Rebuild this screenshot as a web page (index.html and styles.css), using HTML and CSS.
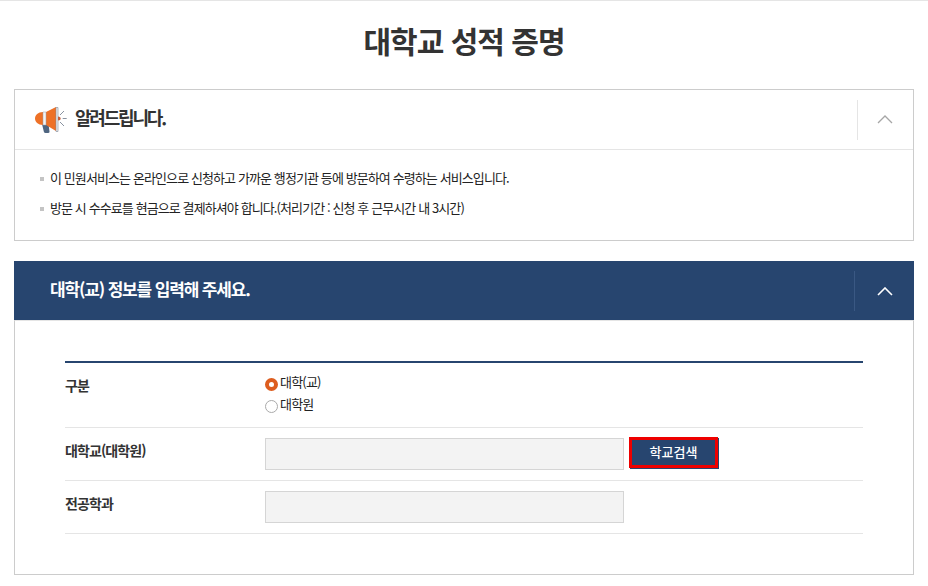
FILE: index.html
```html
<!DOCTYPE html>
<html lang="ko">
<head>
    <meta charset="UTF-8">
    <title>대학교 성적 증명</title>
    <link rel="stylesheet" href="styles.css">
</head>
<body>
    <h1 class="page-title">대학교 성적 증명</h1>

    <div class="notice">
        <div class="notice-head">
            <svg class="notice-icon" viewBox="0 0 32 26" width="32" height="26">
                <path d="M7 17h6.500l1 7.500c.2 1-.6 1.500-2.700 1.500-2 0-2.800-.5-3-1.500z" fill="#4f6580"/>
                <path d="M8 5C3 5 0 8 0 11.500S3 18 8 18z" fill="#ee7127"/>
                <path d="M11 5l10-5v24l-10-6z" fill="#ee7127"/>
                <path d="M8 5h3v13H8z" fill="#f4f4f4" stroke="#9aa2ad" stroke-width=".5"/>
                <path d="M21 .5h2v24h-2z" fill="#eef0f3" stroke="#7d8796" stroke-width=".6"/>
                <path d="M23 9.500c1.800 0 2.700 1 2.700 2s-.9 2-2.700 2z" fill="#c9603a"/>
                <path d="M25 8l4-4M27.700 11.500h4M25 15l4 4" stroke="#8a93a0" stroke-width="1" fill="none"/>
            </svg>
            <strong class="notice-title">알려드립니다.</strong>
            <div class="toggle">
                <svg viewBox="0 0 16 9" width="16" height="9"><path d="M1 8l7-7 7 7" fill="none" stroke="#a6a6a6" stroke-width="1.300"/></svg>
            </div>
        </div>
        <ul class="notice-list">
            <li>이 민원서비스는 온라인으로 신청하고 가까운 행정기관 등에 방문하여 수령하는 서비스입니다.</li>
            <li>방문 시 수수료를 현금으로 결제하셔야 합니다.(처리기간 : 신청 후 근무시간 내 3시간)</li>
        </ul>
    </div>

    <div class="section-bar">
        <strong class="section-title">대학(교) 정보를 입력해 주세요.</strong>
        <div class="toggle toggle-dark">
            <svg class="toggle-arrow" viewBox="0 0 16 9" width="16" height="9"><path d="M1 8l7-7 7 7" fill="none" stroke="#fff" stroke-width="1.600"/></svg>
        </div>
    </div>

    <div class="form-box">
        <div class="form-table">
            <div class="form-row row-kind">
                <div class="form-label">구분</div>
                <div class="form-field radios">
                    <label class="radio-item"><span class="radio radio-on"></span><span class="radio-text">대학(교)</span></label>
                    <label class="radio-item"><span class="radio"></span><span class="radio-text">대학원</span></label>
                </div>
            </div>
            <div class="form-row row-school">
                <div class="form-label">대학교(대학원)</div>
                <div class="form-field field-inline">
                    <div class="text-input"></div>
                    <button class="search-btn" type="button">학교검색</button>
                </div>
            </div>
            <div class="form-row row-major">
                <div class="form-label">전공학과</div>
                <div class="form-field">
                    <div class="text-input"></div>
                </div>
            </div>
        </div>
    </div>
</body>
</html>
```

FILE: styles.css
```css
* {
    margin: 0;
    padding: 0;
    box-sizing: border-box;
}

body {
    width: 928px;
    height: 586px;
    padding: 0 14px;
    overflow: hidden;
    border-top: 1px solid #e5e5e5;
    background: #fff;
    color: #222;
    font-family: "Noto Sans CJK KR", "Noto Sans", sans-serif;
}

.page-title {
    height: 88px;
    padding-top: 18px;
    text-align: center;
    font-size: 30px;
    line-height: 42px;
    font-weight: 700;
    letter-spacing: -1px;
    color: #333;
}

.notice {
    width: 900px;
    height: 152px;
    border: 1px solid #ccc;
}

.notice-head {
    display: flex;
    align-items: center;
    height: 60px;
    padding: 0 2px 0 20px;
    border-bottom: 1px solid #e5e5e5;
}

.notice-icon {
    flex: none;
    margin-right: 8px;
}

.notice-title {
    flex: 1;
    padding-bottom: 5px;
    font-size: 18px;
    letter-spacing: -2.2px;
    color: #333;
}

.toggle {
    display: flex;
    align-items: center;
    justify-content: center;
    width: 54px;
    height: 40px;
    border-left: 1px solid #e5e5e5;
}

.notice-list {
    list-style: none;
    padding: 13px 0 0 25px;
}

.notice-list li {
    position: relative;
    height: 30px;
    padding-left: 10px;
    font-size: 13px;
    line-height: 30px;
    letter-spacing: -0.9px;
}

.notice-list li::before {
    content: "";
    position: absolute;
    left: 0;
    top: 14px;
    width: 4px;
    height: 4px;
    background: #c4c4c4;
}

.section-bar {
    display: flex;
    align-items: center;
    justify-content: space-between;
    width: 900px;
    height: 59px;
    margin-top: 20px;
    padding-left: 36px;
    background: #27456f;
}

.section-title {
    padding-bottom: 4px;
    font-size: 17px;
    letter-spacing: -1.15px;
    color: #fff;
}

.toggle-dark {
    width: 60px;
    border-left-color: #3a5883;
}

.toggle-arrow {
    margin-top: 2px;
}

.form-box {
    width: 900px;
    height: 255px;
    padding: 40px 50px 0;
    border: 1px solid #ccc;
    border-top-color: #e5e5e5;
}

.form-table {
    border-top: 2px solid #27456f;
}

.form-row {
    display: flex;
    border-bottom: 1px solid #e5e5e5;
}

.row-kind {
    height: 65px;
    padding-top: 10px;
}

.row-school,
.row-major {
    height: 53px;
    padding-top: 10px;
}

.form-label {
    width: 200px;
    font-size: 14px;
    line-height: 24px;
    font-weight: 700;
    letter-spacing: -0.9px;
    color: #333;
}

.radios {
    display: flex;
    flex-direction: column;
}

.radio-item {
    display: flex;
    align-items: center;
    height: 22px;
    font-size: 13px;
    letter-spacing: -0.8px;
}

.radio-text {
    margin-bottom: 5px;
}

.radio {
    width: 13px;
    height: 13px;
    margin-right: 2px;
    border: 1px solid #aaa;
    border-radius: 50%;
    background: #fff;
}

.radio-on {
    border: 4.500px solid #dd5d1f;
}

.field-inline {
    display: flex;
    align-items: flex-start;
    gap: 5px;
}

.text-input {
    width: 359px;
    height: 32px;
    border: 1px solid #d5d5d5;
    background: #f3f3f3;
}

.search-btn {
    width: 89px;
    height: 31px;
    margin-top: -1px;
    padding-bottom: 2px;
    border: 3px solid #ee0000;
    background: #27456f;
    color: #fff;
    font-family: inherit;
    font-size: 13px;
    font-weight: 500;
    box-shadow: 1px 1px 0 #27456f;
}
```
